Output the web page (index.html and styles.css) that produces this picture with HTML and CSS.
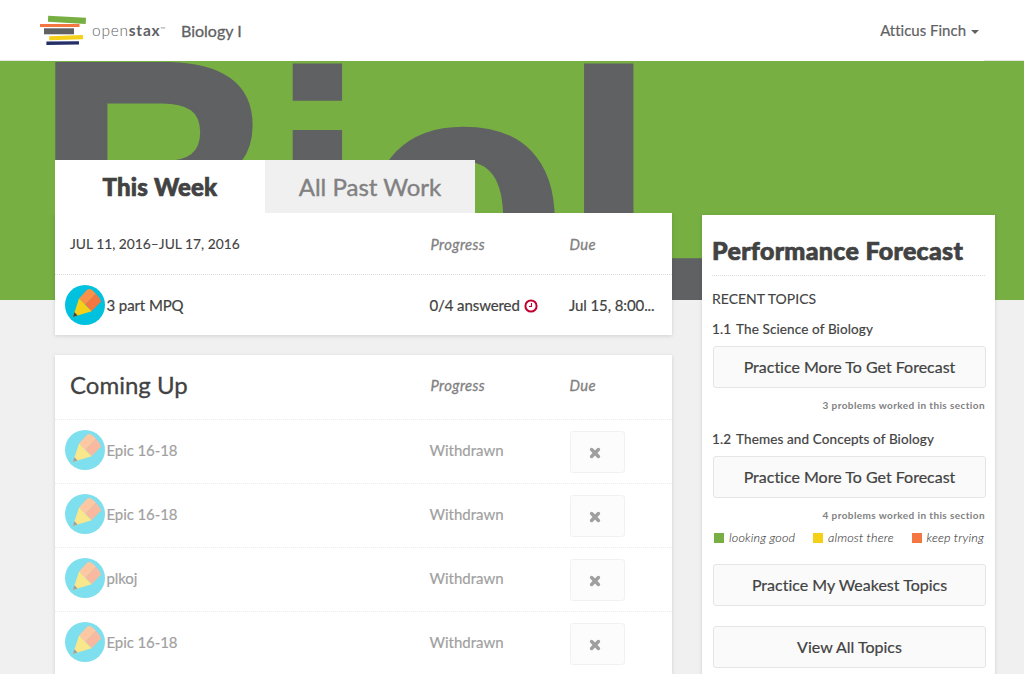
FILE: index.html
```html
<!DOCTYPE html>
<html lang="en">
<head>
<meta charset="utf-8">
<title>Biology I</title>
<link rel="stylesheet" href="styles.css">
</head>
<body>
<svg class="defs" width="0" height="0">
  <symbol id="pencil" viewBox="0 0 40 40">
    <circle cx="20" cy="20" r="20" fill="#00c1de"/>
    <path d="M14 13.5 20.7 6.2Q23 3 26.5 4.6L31 8.8 20 20Z" fill="#fa9148"/>
    <path d="M20.4 19.6 30.8 8.8Q34.6 12 36.2 16.6L26.5 26.2Z" fill="#f47641"/>
    <path d="M14 13.5 26.6 26.2 8 32Z" fill="#f4d019"/>
    <path d="M9.4 27.3 12.6 30.6 8 32Z" fill="#424242"/>
  </symbol>
  <symbol id="cross" viewBox="0 0 12 12">
    <path d="M2.6 2.6 9.4 9.4M9.4 2.6 2.6 9.4" stroke="#424242" stroke-width="3.5" stroke-linecap="round"/>
  </symbol>
</svg>
<header class="navbar">
  <svg class="logo" width="48" height="32" viewBox="0 0 48 32">
    <path d="M8.2 .7 46 2.8 45.7 9 7.9 6.8Z" fill="#77af42"/>
    <path d="M0 9H39.5V12H0Z" fill="#f47641"/>
    <path d="M4 13.3H34V19.3H4Z" fill="#5f6163"/>
    <path d="M9.2 21.3 43 20V24.3L9.2 25.3Z" fill="#f4d019"/>
    <path d="M6.4 26.4 39 26.2V29.6L6.4 29.9Z" fill="#232f66"/>
  </svg>
  <span class="brand">open<b>stax</b><sup>™</sup></span>
  <span class="course">Biology I</span>
  <span class="user">Atticus Finch<i class="caret"></i></span>
</header>
<section class="hero"><div class="hero-title"><span class="cap">B</span>io<span class="tail">l</span>...</div></section>
<main class="content">
  <div class="work">
    <nav class="tabs"><span class="tab active">This Week</span><span class="tab">All Past Work</span></nav>
    <section class="card this-week">
      <div class="row head"><span class="range">JUL 11, 2016–JUL 17, 2016</span><em>Progress</em><em>Due</em></div>
      <div class="row task"><span class="name"><svg class="icon"><use href="#pencil"/></svg>3 part MPQ</span>
        <span class="progress">0/4 answered<svg class="clock" width="14" height="14" viewBox="0 0 14 14" fill="none" stroke="#c2002f"><circle cx="7" cy="7" r="5.6" stroke-width="2"/><path d="M7.5 4V7.5H5" stroke-width="1.1"/></svg></span>
        <span>Jul 15, 8:00...</span></div>
    </section>
    <section class="card upcoming">
      <div class="row head"><h2>Coming Up</h2><em>Progress</em><em>Due</em></div>
      <div class="row task gone"><span class="name"><svg class="icon"><use href="#pencil"/></svg>Epic 16-18</span><span>Withdrawn</span><button class="hide"><svg width="12" height="12"><use href="#cross"/></svg></button></div>
      <div class="row task gone"><span class="name"><svg class="icon"><use href="#pencil"/></svg>Epic 16-18</span><span>Withdrawn</span><button class="hide"><svg width="12" height="12"><use href="#cross"/></svg></button></div>
      <div class="row task gone"><span class="name"><svg class="icon"><use href="#pencil"/></svg>plkoj</span><span>Withdrawn</span><button class="hide"><svg width="12" height="12"><use href="#cross"/></svg></button></div>
      <div class="row task gone"><span class="name"><svg class="icon"><use href="#pencil"/></svg>Epic 16-18</span><span>Withdrawn</span><button class="hide"><svg width="12" height="12"><use href="#cross"/></svg></button></div>
    </section>
  </div>
  <aside class="card forecast">
    <h1>Performance Forecast</h1>
    <h3>RECENT TOPICS</h3>
    <div class="topic"><span>1.1</span>The Science of Biology</div>
    <button class="btn">Practice More To Get Forecast</button>
    <p class="count">3 problems worked in this section</p>
    <div class="topic"><span>1.2</span>Themes and Concepts of Biology</div>
    <button class="btn">Practice More To Get Forecast</button>
    <p class="count">4 problems worked in this section</p>
    <div class="legend"><span><i class="good"></i>looking good</span><span><i class="almost"></i>almost there</span><span><i class="keep"></i>keep trying</span></div>
    <button class="btn weakest">Practice My Weakest Topics</button>
    <button class="btn all">View All Topics</button>
  </aside>
</main>
</body>
</html>
```
FILE: styles.css
```css
* { box-sizing: border-box; }
body { margin: 0; height: 674px; overflow: hidden; background: #f0f0f0; color: #424242; font: 15px/20px Lato, sans-serif; font-variant-ligatures: none; }
h1, h2, h3, p { margin: 0; font-weight: 400; }
.defs { position: absolute; }
.navbar { display: flex; align-items: center; height: 61px; padding: 0 45px 0 40px; color: #5f6163; background: linear-gradient(#e5e5e5, #e5e5e5) 0 60px / 40px 1px no-repeat, linear-gradient(#e5e5e5, #e5e5e5) 100% 60px / 40px 1px no-repeat, #fff; }
.logo { margin-top: 1px; }
.brand { margin: -2px 0 0 4px; width: 89px; font-size: 15.5px; font-weight: 300; letter-spacing: .75px; white-space: nowrap; }
.brand b { font-weight: 700; }
.brand sup { font-size: 7px; line-height: 0; vertical-align: 4px; letter-spacing: 0; }
.course { font-size: 16px; -webkit-text-stroke: .3px; }
.user { margin-left: auto; font-size: 15px; margin-top: -1px; -webkit-text-stroke: .2px; }
.caret { display: inline-block; margin-left: 5px; border: 4px solid transparent; border-top-color: #5f6163; border-bottom: 0; vertical-align: 2px; }
.hero { height: 239px; border-top: 1px solid #77af42; background: #77af42; overflow: hidden; padding-left: 34px; }
.hero-title { margin-top: -38px; font: bold 338px/338px "Liberation Sans", sans-serif; letter-spacing: -4.5px; color: #5f6163; -webkit-text-stroke: 3px #5f6163; white-space: nowrap; }
.cap { display: inline-block; letter-spacing: -7.5px; transform: scale(1.008, 1.06); transform-origin: 0 286px; }
.tail { letter-spacing: -9px; }
.content { display: flex; align-items: flex-start; gap: 30px; margin-top: -140px; padding-left: 55px; position: relative; }
.work { width: 617px; }
.tabs { display: flex; }
.tab { width: 210px; height: 53px; background: #f0f0f0; color: #818181; text-align: center; font-size: 24px; line-height: 54px; -webkit-text-stroke: .4px; }
.tab.active { background: #fff; color: #424242; font-weight: 900; letter-spacing: .2px; -webkit-text-stroke: .7px; }
.card { background: #fff; box-shadow: 0 1px 4px rgba(0,0,0,.13); }
.this-week { height: 122px; clip-path: inset(0 -8px -8px -8px); }
.row { display: grid; grid-template-columns: 360px 139px 1fr; align-items: center; padding-left: 15px; }
.this-week .head { height: 62px; border-bottom: 1px dotted #dcdcdc; }
.head em { padding-left: .5px; font-size: 14.8px; color: #818181; letter-spacing: .4px; -webkit-text-stroke: .3px; }
.range { font-size: 13.8px; -webkit-text-stroke: .1px; }
.task { height: 60px; padding-left: 10px; grid-template-columns: 364.5px 139.5px 1fr; letter-spacing: -.1px; -webkit-text-stroke: .2px; }
.name { display: flex; align-items: center; gap: 1.5px; }
.icon { width: 40px; height: 40px; -webkit-text-stroke: 0; }
.clock { margin-left: 4px; vertical-align: -2px; }
.upcoming { margin-top: 20px; height: 340px; }
.upcoming .head { height: 64px; padding-bottom: 4px; }
h2 { font-size: 24px; line-height: 30px; -webkit-text-stroke: .3px; }
.gone { height: 64px; padding-bottom: 3px; opacity: .5; border-top: 1px dotted #dcdcdc; letter-spacing: 0; }
.gone .name { letter-spacing: -.1px; }
.hide { width: 55px; height: 42px; margin: 3px 0 0 1px; padding: 5px 6px 0 0; border: 1px solid #e5e5e5; border-radius: 3px; background: #fafafa; }
.forecast { width: 293px; height: 480px; margin-top: 55px; padding: 0 10px; }
.forecast h1 { height: 61px; padding-top: 19px; font-size: 25px; line-height: 32px; font-weight: 900; letter-spacing: .3px; -webkit-text-stroke: .7px; border-bottom: 1px dotted #dcdcdc; white-space: nowrap; }
h3 { margin-top: 13px; font-size: 14px; line-height: 20px; -webkit-text-stroke: .1px; }
.topic { margin-top: 10px; font-size: 13.5px; line-height: 20px; letter-spacing: .13px; -webkit-text-stroke: .2px; }
.topic span { display: inline-block; width: 24px; }
.btn { display: block; width: 273px; height: 42px; margin: 7px 0 0 1px; padding: 0; border: 1px solid #e5e5e5; border-radius: 3px; background: #fafafa; color: #424242; font: 16px/20px Lato, sans-serif; font-variant-ligatures: none; -webkit-text-stroke: .2px; }
.count { margin-top: 7px; text-align: right; font-size: 10px; line-height: 20px; font-weight: 700; color: #818181; letter-spacing: .4px; }
.count + .topic { margin-top: 14px; }
.legend { display: flex; justify-content: space-between; margin: 3px 1px 0 2px; font-size: 12.6px; line-height: 20px; font-weight: 300; font-style: italic; letter-spacing: .15px; -webkit-text-stroke: .1px; }
.legend i { display: inline-block; width: 10px; height: 10px; margin-right: 5px; vertical-align: -1px; }
.good { background: #77af42; }
.almost { background: #f4d019; }
.keep { background: #f47641; }
.weakest { margin-top: 16px; }
.all { margin-top: 20px; }
```
